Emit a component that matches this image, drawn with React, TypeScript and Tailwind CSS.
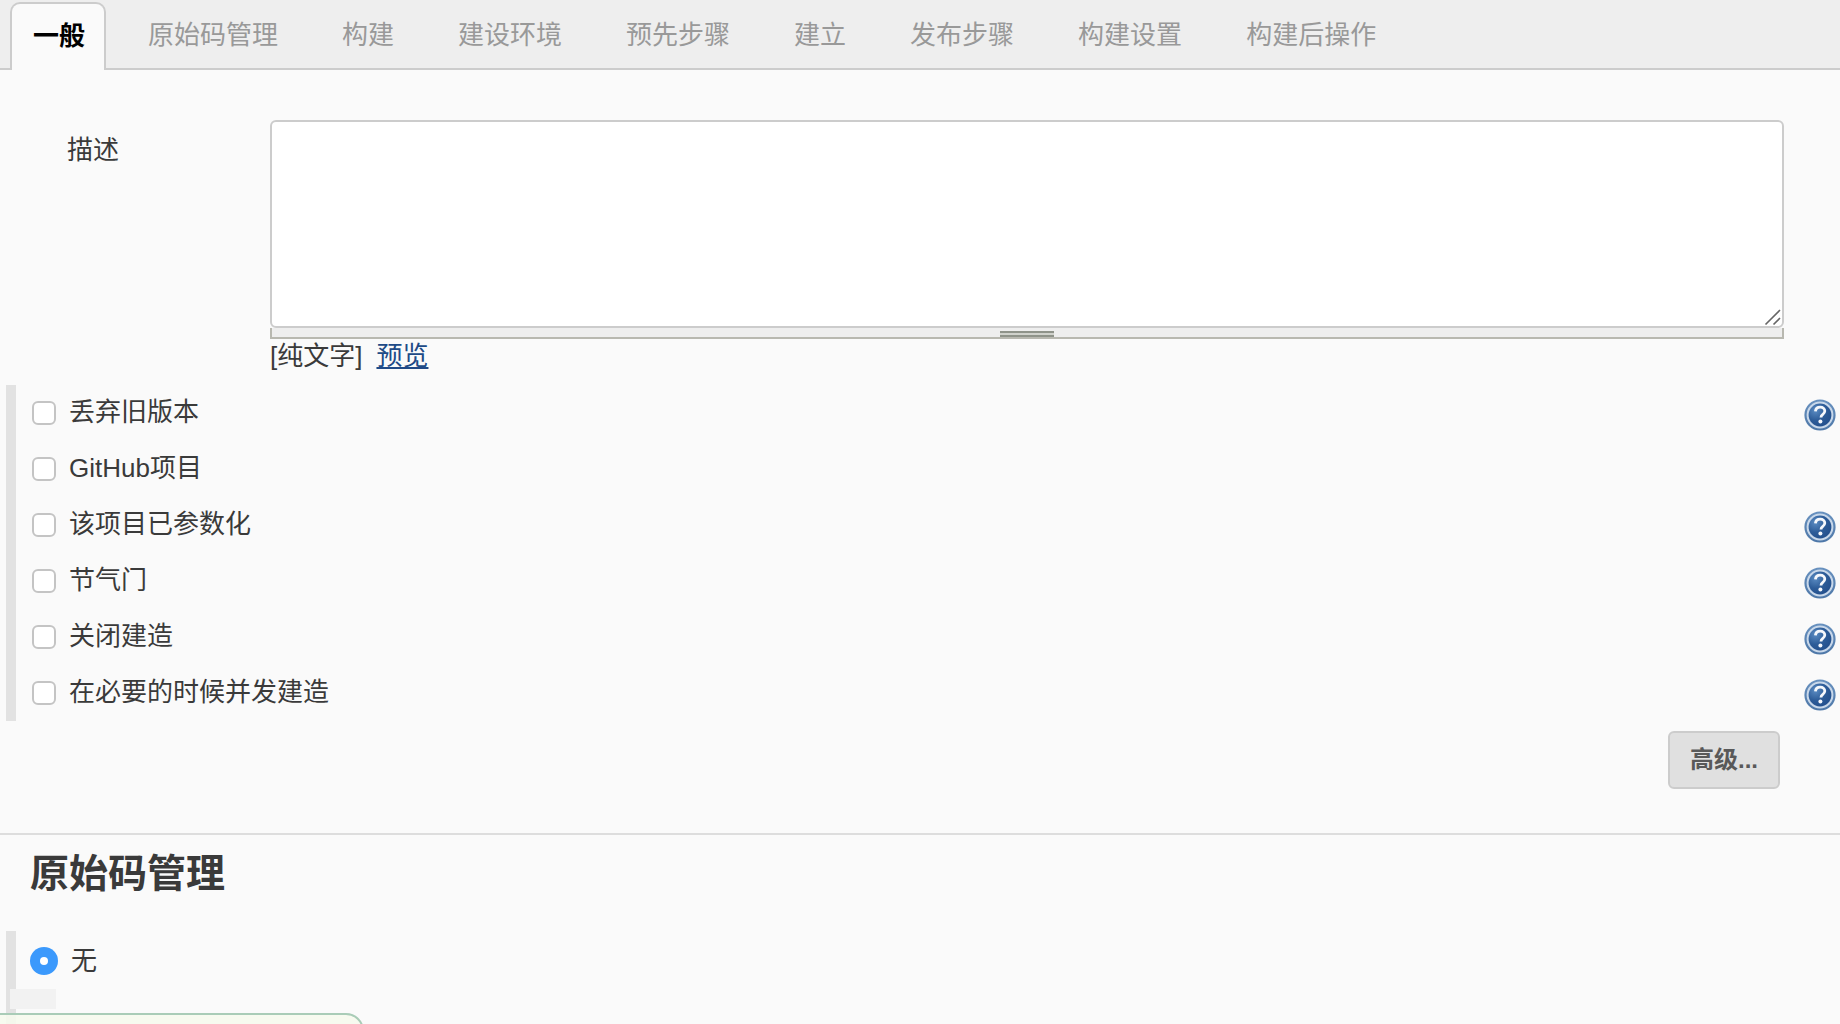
import React from "react";

const tabs = ["原始码管理", "构建", "建设环境", "预先步骤", "建立", "发布步骤", "构建设置", "构建后操作"];

const options = [
  { label: "丢弃旧版本", help: true },
  { label: "GitHub项目", help: false },
  { label: "该项目已参数化", help: true },
  { label: "节气门", help: true },
  { label: "关闭建造", help: true },
  { label: "在必要的时候并发建造", help: true },
];

const HelpIcon: React.FC = () => (
  <svg width="32" height="32" viewBox="0 0 32 32" className="mt-1 shrink-0">
    <defs>
      <radialGradient id="helpFill" cx="30%" cy="30%" r="80%">
        <stop offset="0%" stopColor="#5a8bc2" />
        <stop offset="55%" stopColor="#2d5c98" />
        <stop offset="100%" stopColor="#234f8c" />
      </radialGradient>
      <linearGradient id="helpRim" x1="0" y1="0" x2="0" y2="1">
        <stop offset="0%" stopColor="#4f7fb5" />
        <stop offset="100%" stopColor="#2f6099" />
      </linearGradient>
    </defs>
    <circle cx="16" cy="16" r="15.6" fill="url(#helpRim)" opacity="0.85" />
    <circle cx="16" cy="16" r="13.4" fill="#c9d8ea" />
    <circle cx="16" cy="16" r="11.4" fill="url(#helpFill)" />
    <path
      d="M11.4 12.4c.3-2.7 2.3-4.2 4.8-4.2 2.7 0 4.6 1.6 4.6 3.9 0 1.8-1.1 2.7-2.2 3.5-1.1.8-1.6 1.4-1.6 2.8"
      fill="none"
      stroke="#f6f8fc"
      strokeWidth="2.8"
    />
    <circle cx="16.4" cy="22.6" r="2" fill="#f6f8fc" />
  </svg>
);

export default function App() {
  return (
    <div className="relative h-[1024px] overflow-hidden bg-[#fafafa] text-[26px] text-[#3a3a3a] font-['Liberation_Sans','Noto_Sans_CJK_SC',sans-serif]">
      <div className="flex h-[70px] items-end border-b-2 border-[#ccc] bg-[#eee] pl-[10px]">
        <div className="-mb-[2px] mr-[20px] flex h-[68px] items-center rounded-t-[10px] border-2 border-b-0 border-[#ccc] bg-[#fafafa] pb-[1px] pl-[21px] pr-[19px] font-bold text-black">
          一般
        </div>
        {tabs.map((tab) => (
          <div key={tab} className="mr-[20px] flex h-[68px] items-center px-[22px] pt-[3px] text-[#999]">
            {tab}
          </div>
        ))}
      </div>

      <div className="mt-[50px] flex">
        <div className="w-[270px] shrink-0 pl-[67px] pt-[12px] leading-[36px]">描述</div>
        <div className="w-[1514px]">
          <div className="relative">
            <textarea className="block h-[208px] w-full resize-none rounded-[6px] border-2 border-[#ccc] bg-white outline-none" />
            <svg width="18" height="18" viewBox="0 0 18 18" className="absolute bottom-[2px] right-[2px]">
              <path d="M1.5 16.5 16 2M9.5 16.5 16 10" stroke="#666" strokeWidth="1.6" fill="none" />
            </svg>
          </div>
          <div className="flex h-[11px] justify-center border-x-2 border-b-2 border-[#b8b8b0] bg-[#eee]">
            <div className="mt-[3px] h-[6px] w-[54px] border-y-2 border-[#8f938a] bg-[#d0d2cc]" />
          </div>
          <div className="flex h-[34px] items-center">
            <span>[纯文字]</span>
            <a href="#" className="ml-[14px] text-[#204a87] underline">
              预览
            </a>
          </div>
        </div>
      </div>

      <div className="ml-[6px] mt-[12px] border-l-[10px] border-[#e2e2e2]">
        {options.map((option) => (
          <div key={option.label} className="flex h-[56px] items-center justify-between pl-[16px] pr-[4px]">
            <label className="flex items-center">
              <input
                type="checkbox"
                className="h-6 w-6 appearance-none rounded-[6px] border-2 border-[#c4c4c4] bg-white"
              />
              <span className="-mt-[1px] ml-[13px]">{option.label}</span>
            </label>
            {option.help && <HelpIcon />}
          </div>
        ))}
      </div>

      <div className="mr-[60px] mt-[10px] flex justify-end">
        <button className="h-[58px] w-[112px] rounded-[6px] border-2 border-[#ccc] bg-[#e0e0e0] text-[24px] font-bold text-[#595959]">
          高级...
        </button>
      </div>

      <div className="mt-[44px] border-t-2 border-[#ddd] pl-[30px]">
        <h2 className="flex h-[78px] items-center text-[39px] font-bold">原始码管理</h2>
      </div>

      <div className="ml-[6px] mt-[18px] h-[94px] border-l-[10px] border-[#e2e2e2]">
        <div className="flex h-[60px] items-center pl-[14px]">
          <span className="flex h-[28px] w-[28px] items-center justify-center rounded-full bg-[#3b99fc]">
            <span className="h-[8px] w-[8px] rounded-full bg-white" />
          </span>
          <span className="ml-[13px]">无</span>
        </div>
      </div>

      <div className="absolute left-[10px] top-[989px] h-[20px] w-[46px] bg-[#f2f2f2]" />
      <div className="absolute -left-[2px] top-[1013px] h-[40px] w-[366px] rounded-tr-[18px] border-2 border-[#a9ccb7] bg-[#f6f9ed]/90" />
    </div>
  );
}
